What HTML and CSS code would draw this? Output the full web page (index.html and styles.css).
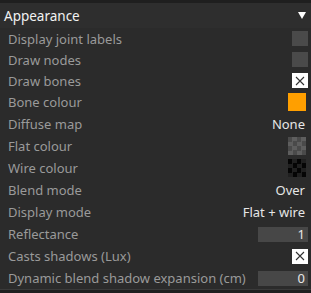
FILE: index.html
```html
<!DOCTYPE html>
<html lang="en">
<head>
    <meta charset="UTF-8">
    <title>Appearance</title>
    <link rel="stylesheet" href="styles.css">
</head>
<body>
    <div class="panel">
        <div class="header">
            <span class="title">Appearance</span>
            <span class="arrow"></span>
        </div>
        <div class="rows">
            <div class="row short"><span class="label">Display joint labels</span><span class="check"></span></div>
            <div class="row short"><span class="label">Draw nodes</span><span class="check"></span></div>
            <div class="row short"><span class="label">Draw bones</span><span class="check on">
                <svg width="10" height="10" viewBox="0 0 10 10"><path d="M1 1L9 9M9 1L1 9" stroke="#333" stroke-width="1.1"/></svg>
            </span></div>
            <div class="row"><span class="label">Bone colour</span><span class="swatch orange"></span></div>
            <div class="row"><span class="label">Diffuse map</span><span class="value">None</span></div>
            <div class="row"><span class="label">Flat colour</span><span class="swatch grey-checker"></span></div>
            <div class="row"><span class="label">Wire colour</span><span class="swatch black-checker"></span></div>
            <div class="row"><span class="label">Blend mode</span><span class="value">Over</span></div>
            <div class="row"><span class="label">Display mode</span><span class="value">Flat + wire</span></div>
            <div class="row"><span class="label">Reflectance</span><span class="field">1</span></div>
            <div class="row"><span class="label">Casts shadows (Lux)</span><span class="check on">
                <svg width="10" height="10" viewBox="0 0 10 10"><path d="M1 1L9 9M9 1L1 9" stroke="#333" stroke-width="1.1"/></svg>
            </span></div>
            <div class="row"><span class="label">Dynamic blend shadow expansion (cm)</span><span class="field">0</span></div>
        </div>
    </div>
</body>
</html>
```

FILE: styles.css
```css
body {
    margin: 0;
    background-color: #1f1f1f;
    font-family: "Noto Sans", "Open Sans", sans-serif;
    width: 311px;
    height: 293px;
    overflow: hidden;
}
.panel {
    margin-top: 3px;
    height: 286px;
    background-color: #2b2b2b;
    border-bottom: 1px solid #3a3a3a;
}
.header {
    display: flex;
    justify-content: space-between;
    align-items: center;
    height: 25px;
    padding: 0 5px 0 4px;
    background-color: #2e2e2e;
}
.title {
    color: #f2f2f2;
    font-size: 13.5px;
}
.arrow {
    width: 0;
    height: 0;
    border-left: 4px solid transparent;
    border-right: 4px solid transparent;
    border-top: 7px solid #ffffff;
}
.rows {
    margin-left: 2px;
    margin-right: 3px;
    padding: 0 0 0 6px;
    background-color: #2b2b2b;
}
.row {
    display: flex;
    justify-content: space-between;
    align-items: center;
    height: 22px;
}
.row.short {
    height: 21px;
}
.label {
    color: #9a9a9a;
    font-size: 13px;
}
.check {
    width: 16px;
    height: 15px;
    background-color: #4a4a4a;
    display: flex;
    align-items: center;
    justify-content: center;
}
.check.on {
    background-color: #ffffff;
}
.swatch {
    width: 18px;
    height: 18px;
    margin-right: 2px;
}
.orange {
    background-color: #ff9f00;
}
.grey-checker {
    background-color: #4a4a4a;
    background-image: conic-gradient(#5e5e5e 25%, transparent 0 50%, #5e5e5e 0 75%, transparent 0);
    background-size: 9px 9px;
}
.black-checker {
    background-color: #050505;
    background-image: conic-gradient(#202020 25%, transparent 0 50%, #202020 0 75%, transparent 0);
    background-size: 9px 9px;
}
.value {
    color: #e6e6e6;
    font-size: 13px;
    margin-right: 3px;
}
.field {
    width: 50px;
    height: 15px;
    box-sizing: border-box;
    background-color: #474747;
    color: #e6e6e6;
    font-size: 13px;
    line-height: 15px;
    text-align: right;
    padding-right: 3px;
}
```
